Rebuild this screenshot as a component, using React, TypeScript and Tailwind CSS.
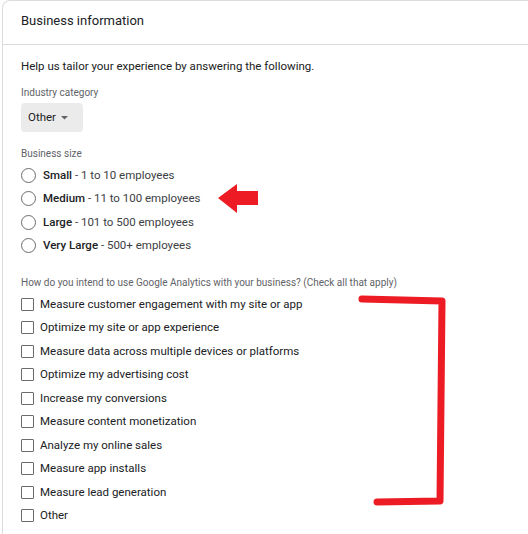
import React from "react";

const sizes = [
  { b: "Small", r: " - 1 to 10 employees" },
  { b: "Medium", r: " - 11 to 100 employees" },
  { b: "Large", r: " - 101 to 500 employees" },
  { b: "Very Large", r: " - 500+ employees" },
];

const uses = [
  "Measure customer engagement with my site or app",
  "Optimize my site or app experience",
  "Measure data across multiple devices or platforms",
  "Optimize my advertising cost",
  "Increase my conversions",
  "Measure content monetization",
  "Analyze my online sales",
  "Measure app installs",
  "Measure lead generation",
  "Other",
];

export default function App() {
  return (
    <div className="relative w-[528px] h-[534px] overflow-hidden bg-white font-['Roboto',sans-serif] text-[#202124]">
      <div className="ml-[2px] h-full border-l border-t border-[#dadce0] rounded-tl-[8px]">
        <div className="h-[44px] border-b border-[#dadce0] pl-[18px] pt-[11px] text-[13px] leading-[18px]">
          Business information
        </div>
        <div className="pl-[18px] pt-[14px]">
          <div className="text-[11.5px] leading-[14px]">
            Help us tailor your experience by answering the following.
          </div>
          <div className="mt-[14px] text-[10px] leading-[12px] text-[#5f6368]">
            Industry category
          </div>
          <div className="mt-[4px] flex items-center w-[62px] h-[29px] rounded-[4px] bg-[#ebebeb] pl-[7px] text-[11.5px]">
            Other
            <svg width="7" height="4" viewBox="0 0 7 4" className="ml-[5px]">
              <path d="M0 0 L7 0 L3.5 3.5 Z" fill="#5f6368" />
            </svg>
          </div>
          <div className="mt-[16px] text-[10px] leading-[12px] text-[#5f6368]">
            Business size
          </div>
          <div className="mt-[4px] flex flex-col">
            {sizes.map((s) => (
              <div key={s.b} className="flex items-center h-[23.3px]">
                <span className="w-[15px] h-[15px] rounded-full border border-[#6b6b6b] bg-white" />
                <span className="ml-[7px] text-[11.5px]">
                  <span className="font-medium">{s.b}</span>
                  <span className="text-[#3c4043]">{s.r}</span>
                </span>
              </div>
            ))}
          </div>
          <div className="mt-[19.5px] text-[10px] leading-[12px] text-[#5f6368]">
            How do you intend to use Google Analytics with your business? (Check all that apply)
          </div>
          <div className="mt-[4px] flex flex-col">
            {uses.map((u) => (
              <div key={u} className="flex items-center h-[23.5px]">
                <span className="w-[13px] h-[13px] rounded-[1px] border border-[#6b6b6b] bg-white" />
                <span className="ml-[6px] text-[11.5px]">{u}</span>
              </div>
            ))}
          </div>
        </div>
      </div>
      <svg className="absolute left-0 top-0 pointer-events-none" width="528" height="534" viewBox="0 0 528 534">
        <polygon points="218,198 237,184 237,191 258,191 258,205 237,205 237,213" fill="#ed1c24" />
        <path
          d="M362 299 L442 301 L440 501 L377 502"
          fill="none"
          stroke="#ed1c24"
          strokeWidth="7"
          strokeLinecap="round"
          strokeLinejoin="round"
        />
      </svg>
    </div>
  );
}
